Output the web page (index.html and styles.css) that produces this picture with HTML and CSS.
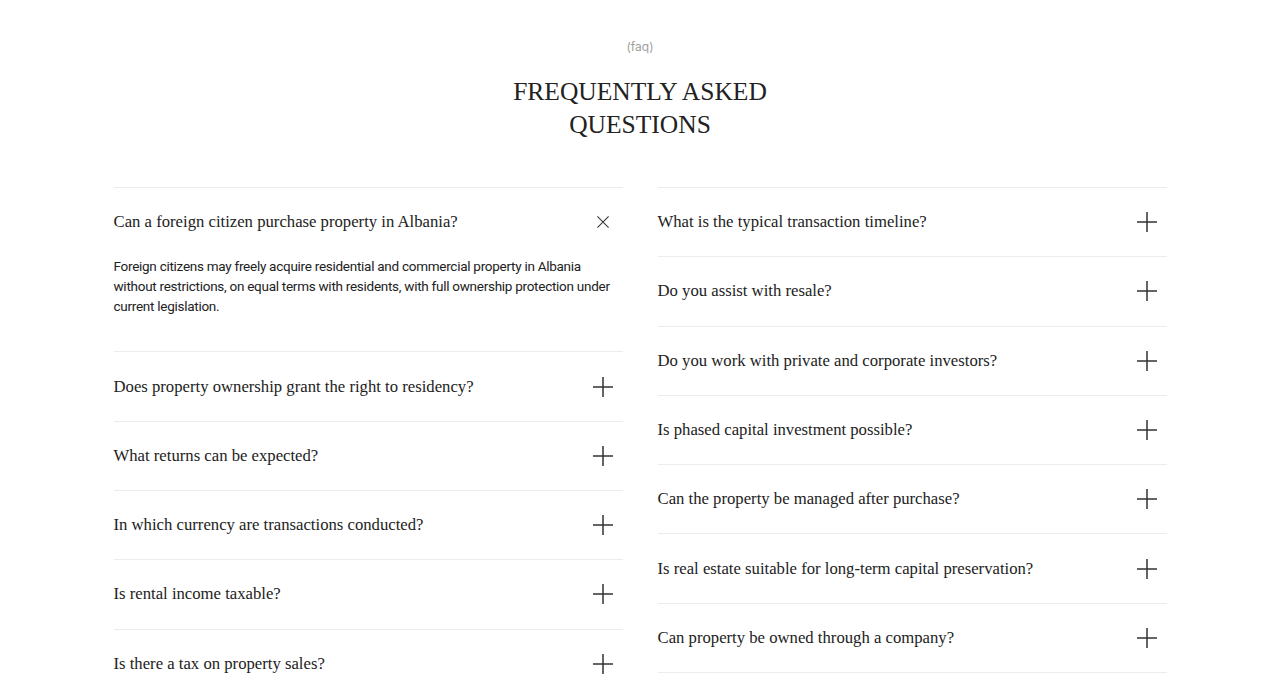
FILE: index.html
```html
<!DOCTYPE html>
<html lang="en">
<head>
<meta charset="utf-8">
<title>FAQ</title>
<link rel="stylesheet" href="styles.css">
</head>
<body>
<section class="faq">
  <div class="eyebrow">(faq)</div>
  <h2 class="title">FREQUENTLY ASKED<br>QUESTIONS</h2>
  <div class="grid">
    <div class="col">
      <div class="item open">
        <div class="q"><span>Can a foreign citizen purchase property in Albania?</span>
          <svg class="ic" viewBox="0 0 20 20"><path d="M3 3L17 17M17 3L3 17"/></svg></div>
        <p class="a">Foreign citizens may freely acquire residential and commercial property in Albania without restrictions, on equal terms with residents, with full ownership protection under current legislation.</p>
      </div>
      <div class="item"><div class="q"><span>Does property ownership grant the right to residency?</span><svg class="ic" viewBox="0 0 20 20"><path d="M0 10H20M10 0V20"/></svg></div></div>
      <div class="item"><div class="q"><span>What returns can be expected?</span><svg class="ic" viewBox="0 0 20 20"><path d="M0 10H20M10 0V20"/></svg></div></div>
      <div class="item"><div class="q"><span>In which currency are transactions conducted?</span><svg class="ic" viewBox="0 0 20 20"><path d="M0 10H20M10 0V20"/></svg></div></div>
      <div class="item"><div class="q"><span>Is rental income taxable?</span><svg class="ic" viewBox="0 0 20 20"><path d="M0 10H20M10 0V20"/></svg></div></div>
      <div class="item"><div class="q"><span>Is there a tax on property sales?</span><svg class="ic" viewBox="0 0 20 20"><path d="M0 10H20M10 0V20"/></svg></div></div>
    </div>
    <div class="col">
      <div class="item"><div class="q"><span>What is the typical transaction timeline?</span><svg class="ic" viewBox="0 0 20 20"><path d="M0 10H20M10 0V20"/></svg></div></div>
      <div class="item"><div class="q"><span>Do you assist with resale?</span><svg class="ic" viewBox="0 0 20 20"><path d="M0 10H20M10 0V20"/></svg></div></div>
      <div class="item"><div class="q"><span>Do you work with private and corporate investors?</span><svg class="ic" viewBox="0 0 20 20"><path d="M0 10H20M10 0V20"/></svg></div></div>
      <div class="item"><div class="q"><span>Is phased capital investment possible?</span><svg class="ic" viewBox="0 0 20 20"><path d="M0 10H20M10 0V20"/></svg></div></div>
      <div class="item"><div class="q"><span>Can the property be managed after purchase?</span><svg class="ic" viewBox="0 0 20 20"><path d="M0 10H20M10 0V20"/></svg></div></div>
      <div class="item"><div class="q"><span>Is real estate suitable for long-term capital preservation?</span><svg class="ic" viewBox="0 0 20 20"><path d="M0 10H20M10 0V20"/></svg></div></div>
      <div class="item"><div class="q"><span>Can property be owned through a company?</span><svg class="ic" viewBox="0 0 20 20"><path d="M0 10H20M10 0V20"/></svg></div></div>
    </div>
  </div>
</section>
</body>
</html>
```
FILE: styles.css
```css
* { box-sizing: border-box; }
html, body { margin: 0; padding: 0; background: #fff; }
body { color: #222; font-family: "Liberation Serif", serif; }

.faq {
  width: 1053px;
  margin: 0 auto;
  padding-top: 39px;
}
.eyebrow {
  font-family: Inter, "Liberation Sans", sans-serif;
  font-size: 12px;
  line-height: 16px;
  color: #a0a0a0;
  text-align: center;
}
.title {
  margin: 20px 0 0;
  font-family: "Liberation Serif", serif;
  font-weight: 400;
  font-size: 25.5px;
  line-height: 33px;
  text-align: center;
  color: #222;
}
.grid {
  margin-top: 46px;
  display: grid;
  grid-template-columns: 509px 509px;
  column-gap: 35px;
  align-items: start;
}
.item {
  border-top: 1px solid #ececec;
}
.col .item:last-child { border-bottom: 1px solid #ececec; }
.col:first-child .item:last-child { border-bottom: none; }
.q {
  height: 68.3px;
  display: flex;
  align-items: center;
  justify-content: space-between;
  padding-right: 10px;
  font-size: 16.7px;
  color: #222;
}
.ic {
  width: 20px;
  height: 20px;
  fill: none;
  stroke: #333;
  stroke-width: 1.5;
  flex: none;
}
.open .ic { width: 16px; height: 16px; margin-right: 2px; stroke-width: 1.3; }
.a {
  margin: 0;
  padding: 1px 0 35px;
  font-family: Roboto, "Liberation Sans", sans-serif;
  font-size: 13.5px;
  line-height: 19.7px;
  letter-spacing: -0.02em;
  color: #222;
}
```
